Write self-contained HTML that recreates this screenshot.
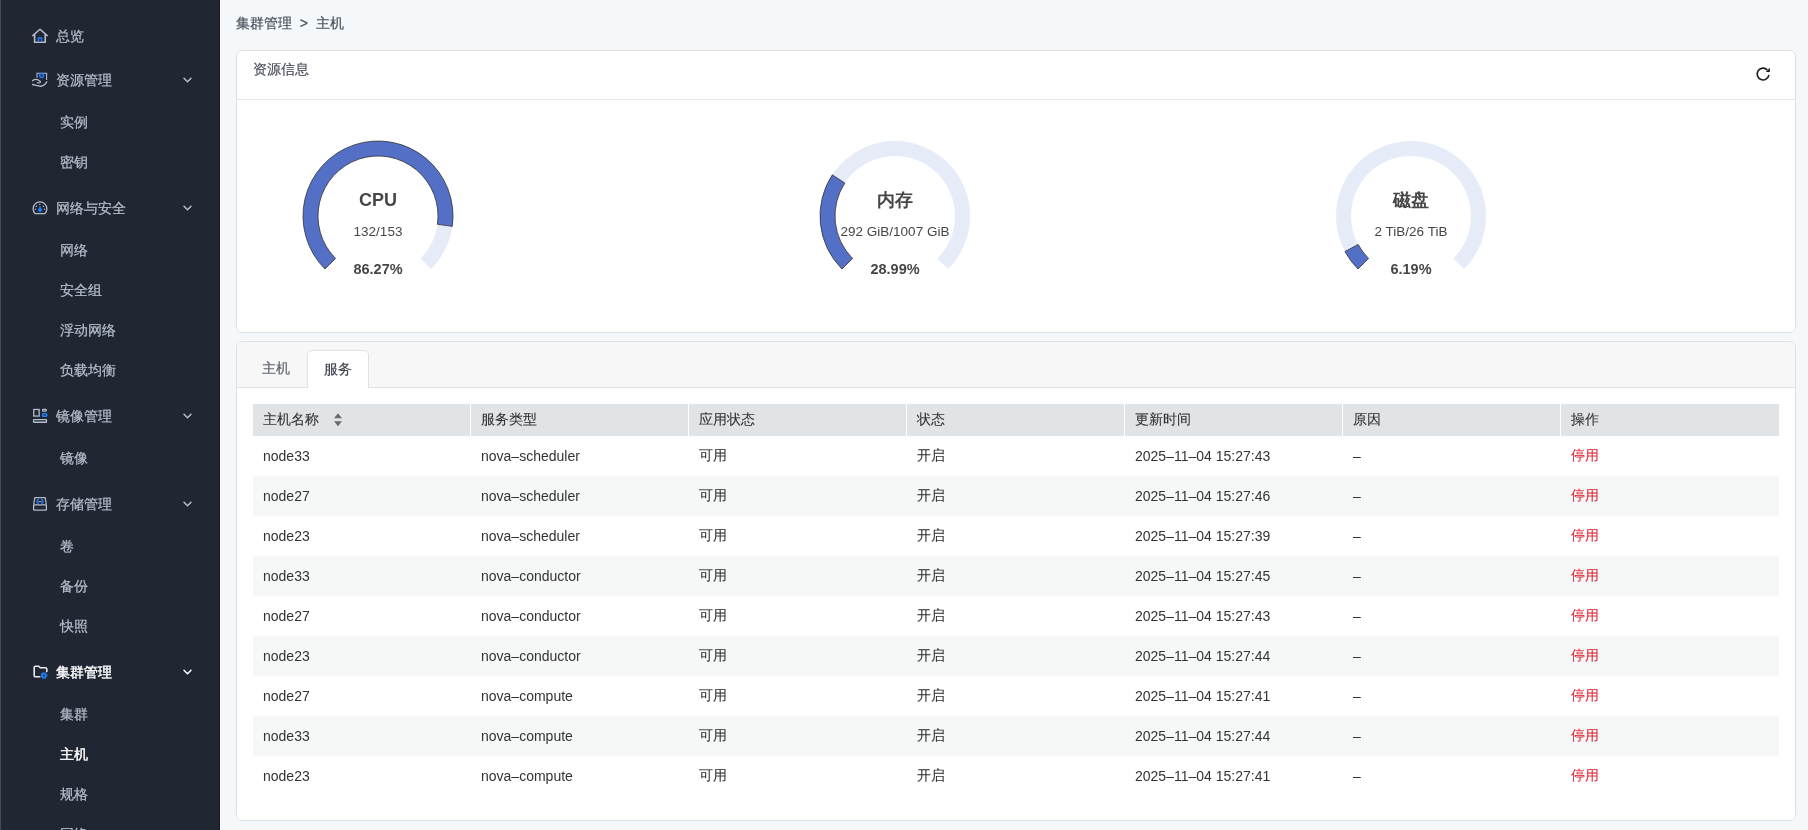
<!DOCTYPE html>
<html><head><meta charset="utf-8"><style>
*{margin:0;padding:0;box-sizing:border-box}
html,body{width:1808px;height:830px;overflow:hidden}
body{font-family:"Liberation Sans",sans-serif;font-size:14px;background:#f4f8fb;position:relative;color:#333}
.sb{position:absolute;left:0;top:0;width:220px;height:830px;background:#212633;overflow:hidden}
.sb .edge{position:absolute;left:0;top:0;width:1px;height:830px;background:#454a56}.sb .edge2{position:absolute;left:219px;top:0;width:1px;height:830px;background:#151a27}.sep{position:absolute;left:220px;top:0;width:1px;height:830px;background:#fff}
.sb .it{position:absolute;height:20px;line-height:20px;font-size:14px;color:#b3bccb;white-space:nowrap;-webkit-text-stroke:0.25px #b3bccb;will-change:transform}
.sb .h{left:56px}
.sb .c{left:60px}
.sb .act{color:#ffffff;-webkit-text-stroke:0.4px #fff}
.sb svg.ic{position:absolute;left:32px;width:16px;height:16px}
.sb svg.ch{position:absolute;left:181px;width:12px;height:12px}
.bc{will-change:transform;-webkit-text-stroke:0.2px #4b505b;position:absolute;left:236px;top:13px;height:20px;line-height:20px;color:#4b505b;font-size:14px;white-space:nowrap}
.card1{position:absolute;left:236px;top:50px;width:1560px;height:283px;background:#fff;border:1px solid #dfe0e2;border-radius:6px}
.card1 .hd{position:absolute;left:0;top:0;right:0;height:49px;border-bottom:1px solid #e5e7eb}
.card1 .tt{will-change:transform;-webkit-text-stroke:0.2px #4b505b;position:absolute;left:16px;top:8px;line-height:20px;color:#4b505b}
.card2{position:absolute;left:236px;top:341px;width:1560px;height:480px;background:#fff;border:1px solid #dfe0e2;border-radius:6px;overflow:hidden}
.tabbar{position:absolute;left:0;top:0;right:0;height:46px;background:#f7f7f7;border-bottom:1px solid #dfe2e6}
.tab{will-change:transform;-webkit-text-stroke:0.2px currentColor;position:absolute;top:8px;height:38px;line-height:36px;font-size:14px;color:#5f6570;text-align:center}
.tab.on{background:#fff;border:1px solid #dde1e8;border-bottom:none;border-radius:5px 5px 0 0;color:#3f444d}
table{will-change:transform;position:absolute;left:16px;top:62px;border-collapse:separate;border-spacing:0;table-layout:fixed;width:1526px}
th{-webkit-text-stroke:0.1px #333;height:32px;background:#e1e4e6;text-align:left;font-weight:normal;color:#333;padding-left:10px;border-right:1px solid #fff;font-size:14px}
th:last-child{border-right:none}
td{height:40px;padding-left:10px;color:#333;font-size:14px;white-space:nowrap}
tr.alt td{background:#f6f7f7}
td.op{color:#e0283a;-webkit-text-stroke:0.1px #e0283a}td.cj{-webkit-text-stroke:0.1px #333}
.g{position:absolute;left:0;top:0}
.gl{will-change:transform;position:absolute;text-align:center;width:200px;color:#464646;white-space:nowrap}
</style></head><body>
<div class="sb"><div class="edge"></div><div class="edge2"></div><div class="it h" style="top:26px">总览</div><svg class="ic" style="top:28px" viewBox="0 0 16 16"><path d="M0.8 7.6L8 1.3l7.2 6.3" fill="none" stroke="#b3bccb" stroke-width="1.5" stroke-linejoin="round" stroke-linecap="round"/><path d="M2.6 6.2v8h10.6v-8" fill="none" stroke="#b3bccb" stroke-width="1.6"/><path d="M6.4 13.6V10h3.2v3.6" fill="none" stroke="#1e80ff" stroke-width="1.4"/></svg><div class="it h" style="top:70px">资源管理</div><svg class="ic" style="top:72px" viewBox="0 0 16 16"><path d="M5 5.8V1.3h9.6V8" fill="none" stroke="#b3bccb" stroke-width="1.1"/><rect x="7.7" y="1.6" width="3.8" height="3.8" rx="1.3" fill="none" stroke="#1e80ff" stroke-width="1.6"/><path d="M0.4 8.7C2 7.6 4.2 7.1 6 7.9C7.8 8.6 8.8 9.6 8.2 10.4C7.6 11 6.4 10.8 5.5 10.6M0.4 12.5C3.5 13.2 6.8 14.5 9.5 14.2C11.8 13.9 13.6 12 14.8 9.8" fill="none" stroke="#b3bccb" stroke-width="1.3" stroke-linecap="round"/></svg><svg class="ch" style="top:74px" viewBox="0 0 12 12"><path d="M3 4.2L6.5 7.8 10 4.2" fill="none" stroke="#b3bccb" stroke-width="1.5" stroke-linecap="round" stroke-linejoin="round"/></svg><div class="it c" style="top:112px">实例</div><div class="it c" style="top:152px">密钥</div><div class="it h" style="top:198px">网络与安全</div><svg class="ic" style="top:200px" viewBox="0 0 16 16"><path d="M3.1 13.6A6.9 6.9 0 1 1 12.9 13.6Z" fill="none" stroke="#b3bccb" stroke-width="1.3" stroke-linejoin="round"/><circle cx="7.8" cy="4.4" r="0.75" fill="#b3bccb"/><circle cx="4.4" cy="6.3" r="0.75" fill="#b3bccb"/><circle cx="11.3" cy="6.3" r="0.75" fill="#b3bccb"/><circle cx="3.5" cy="9.3" r="0.75" fill="#b3bccb"/><circle cx="12.5" cy="9.3" r="0.75" fill="#b3bccb"/><path d="M8 5.8L10.1 10a2.1 2.1 0 1 1-4.2 0Z" fill="#1e80ff"/></svg><svg class="ch" style="top:202px" viewBox="0 0 12 12"><path d="M3 4.2L6.5 7.8 10 4.2" fill="none" stroke="#b3bccb" stroke-width="1.5" stroke-linecap="round" stroke-linejoin="round"/></svg><div class="it c" style="top:240px">网络</div><div class="it c" style="top:280px">安全组</div><div class="it c" style="top:320px">浮动网络</div><div class="it c" style="top:360px">负载均衡</div><div class="it h" style="top:406px">镜像管理</div><svg class="ic" style="top:408px" viewBox="0 0 16 16"><rect x="1.75" y="1.45" width="5.4" height="6.6" fill="none" stroke="#b3bccb" stroke-width="1.3"/><rect x="10.55" y="1.45" width="3.7" height="1.7" rx="0.6" fill="none" stroke="#b3bccb" stroke-width="1.3"/><rect x="10.45" y="5.85" width="4.3" height="2.3" rx="0.8" fill="none" stroke="#1e80ff" stroke-width="1.5"/><rect x="1.55" y="11.65" width="12.9" height="2.6" rx="0.3" fill="none" stroke="#b3bccb" stroke-width="1.3"/></svg><svg class="ch" style="top:410px" viewBox="0 0 12 12"><path d="M3 4.2L6.5 7.8 10 4.2" fill="none" stroke="#b3bccb" stroke-width="1.5" stroke-linecap="round" stroke-linejoin="round"/></svg><div class="it c" style="top:448px">镜像</div><div class="it h" style="top:494px">存储管理</div><svg class="ic" style="top:496px" viewBox="0 0 16 16"><path d="M1.7 8.6L2.8 1.7h10.4l1.1 6.9" fill="none" stroke="#b3bccb" stroke-width="1.2" stroke-linejoin="round"/><rect x="1.6" y="8.8" width="12.8" height="5.4" rx="0.8" fill="none" stroke="#b3bccb" stroke-width="1.3"/><path d="M6.3 3.3C4.6 4 4.6 6.8 6.3 7.3M9.7 3.3C11.4 4 11.4 6.8 9.7 7.3" fill="none" stroke="#1e80ff" stroke-width="1.4" stroke-linecap="round"/><path d="M6.8 5.5h2.4" stroke="#b3bccb" stroke-width="0.9" stroke-linecap="round"/></svg><svg class="ch" style="top:498px" viewBox="0 0 12 12"><path d="M3 4.2L6.5 7.8 10 4.2" fill="none" stroke="#b3bccb" stroke-width="1.5" stroke-linecap="round" stroke-linejoin="round"/></svg><div class="it c" style="top:536px">卷</div><div class="it c" style="top:576px">备份</div><div class="it c" style="top:616px">快照</div><div class="it h act" style="top:662px">集群管理</div><svg class="ic" style="top:664px" viewBox="0 0 16 16"><path d="M7.8 12.8H3.6Q2.2 12.8 2.2 11.4V3.6Q2.2 2.2 3.6 2.2H6.7L8.3 3.8H13.4Q14.8 3.8 14.8 5.2V7.6" fill="none" stroke="#ececec" stroke-width="1.6" stroke-linejoin="round" stroke-linecap="round"/><circle cx="11.9" cy="11.6" r="1.9" fill="none" stroke="#1e80ff" stroke-width="1.7"/><circle cx="11.9" cy="11.6" r="2.9" fill="none" stroke="#1e80ff" stroke-width="1.2" stroke-dasharray="1.3 1.1"/></svg><svg class="ch" style="top:666px" viewBox="0 0 12 12"><path d="M3 4.2L6.5 7.8 10 4.2" fill="none" stroke="#ffffff" stroke-width="1.5" stroke-linecap="round" stroke-linejoin="round"/></svg><div class="it c" style="top:704px">集群</div><div class="it c act" style="top:744px">主机</div><div class="it c" style="top:784px">规格</div><div class="it c" style="top:824px">网络</div></div><div class="sep"></div>
<div class="bc">集群管理 &nbsp;&gt;&nbsp; 主机</div>
<div class="card1"><div class="hd"><div class="tt">资源信息</div><svg width="16" height="16" viewBox="0 0 16 16" style="position:absolute;left:1518px;top:15px"><path d="M13.9 8.9A5.9 5.9 0 1 1 12.3 3.9" fill="none" stroke="#1a1d23" stroke-width="1.6"/><path d="M14.9 1.7V5.9H10.7Z" fill="#1a1d23"/></svg></div></div>
<svg class="g" width="1808" height="830" viewBox="0 0 1808 830" style="position:absolute;left:0;top:0;pointer-events:none"><path d="M324.97 269.03A75 75 0 1 1 431.03 269.03L420.43 258.43A60 60 0 1 0 335.57 258.43Z" fill="#e6ebf8"/><path d="M324.97 269.03A75 75 0 1 1 452.28 226.35L437.43 224.28A60 60 0 1 0 335.57 258.43Z" fill="#5470c6" stroke="#333" stroke-width="0.8"/><path d="M841.97 269.03A75 75 0 1 1 948.03 269.03L937.43 258.43A60 60 0 1 0 852.57 258.43Z" fill="#e6ebf8"/><path d="M841.97 269.03A75 75 0 0 1 832.30 174.85L844.84 183.08A60 60 0 0 0 852.57 258.43Z" fill="#5470c6" stroke="#333" stroke-width="0.8"/><path d="M1357.97 269.03A75 75 0 1 1 1464.03 269.03L1453.43 258.43A60 60 0 1 0 1368.57 258.43Z" fill="#e6ebf8"/><path d="M1357.97 269.03A75 75 0 0 1 1344.96 251.54L1358.16 244.43A60 60 0 0 0 1368.57 258.43Z" fill="#5470c6" stroke="#333" stroke-width="0.8"/></svg>
<div class="gl" style="left:278px;top:189px;font-size:18px;font-weight:bold;line-height:22px">CPU</div><div class="gl" style="left:278px;top:222px;font-size:13.5px;line-height:18px;padding-top:1px">132/153</div><div class="gl" style="left:278px;top:260px;font-size:14.5px;font-weight:bold;line-height:18px">86.27%</div><div class="gl" style="left:795px;top:189px;font-size:18px;font-weight:bold;line-height:22px">内存</div><div class="gl" style="left:795px;top:222px;font-size:13.5px;line-height:18px;padding-top:1px">292 GiB/1007 GiB</div><div class="gl" style="left:795px;top:260px;font-size:14.5px;font-weight:bold;line-height:18px">28.99%</div><div class="gl" style="left:1311px;top:189px;font-size:18px;font-weight:bold;line-height:22px">磁盘</div><div class="gl" style="left:1311px;top:222px;font-size:13.5px;line-height:18px;padding-top:1px">2 TiB/26 TiB</div><div class="gl" style="left:1311px;top:260px;font-size:14.5px;font-weight:bold;line-height:18px">6.19%</div>
<div class="card2"><div class="tabbar"><div class="tab" style="left:12px;width:54px">主机</div><div class="tab on" style="left:70px;width:62px">服务</div></div>
<table><colgroup><col style="width:218px"><col style="width:218px"><col style="width:218px"><col style="width:218px"><col style="width:218px"><col style="width:218px"><col style="width:218px"></colgroup><tr><th style="position:relative">主机名称<svg width="8" height="14" viewBox="0 0 8 14" style="position:absolute;left:81px;top:9px"><path d="M4 0.3L8 5.3H0Z M0 8.3H8L4 13.3Z" fill="#6b6b6b"/></svg></th><th>服务类型</th><th>应用状态</th><th>状态</th><th>更新时间</th><th>原因</th><th>操作</th></tr><tr><td>node33</td><td>nova–scheduler</td><td class="cj">可用</td><td class="cj">开启</td><td>2025–11–04 15:27:43</td><td>–</td><td class="op">停用</td></tr><tr class="alt"><td>node27</td><td>nova–scheduler</td><td class="cj">可用</td><td class="cj">开启</td><td>2025–11–04 15:27:46</td><td>–</td><td class="op">停用</td></tr><tr><td>node23</td><td>nova–scheduler</td><td class="cj">可用</td><td class="cj">开启</td><td>2025–11–04 15:27:39</td><td>–</td><td class="op">停用</td></tr><tr class="alt"><td>node33</td><td>nova–conductor</td><td class="cj">可用</td><td class="cj">开启</td><td>2025–11–04 15:27:45</td><td>–</td><td class="op">停用</td></tr><tr><td>node27</td><td>nova–conductor</td><td class="cj">可用</td><td class="cj">开启</td><td>2025–11–04 15:27:43</td><td>–</td><td class="op">停用</td></tr><tr class="alt"><td>node23</td><td>nova–conductor</td><td class="cj">可用</td><td class="cj">开启</td><td>2025–11–04 15:27:44</td><td>–</td><td class="op">停用</td></tr><tr><td>node27</td><td>nova–compute</td><td class="cj">可用</td><td class="cj">开启</td><td>2025–11–04 15:27:41</td><td>–</td><td class="op">停用</td></tr><tr class="alt"><td>node33</td><td>nova–compute</td><td class="cj">可用</td><td class="cj">开启</td><td>2025–11–04 15:27:44</td><td>–</td><td class="op">停用</td></tr><tr><td>node23</td><td>nova–compute</td><td class="cj">可用</td><td class="cj">开启</td><td>2025–11–04 15:27:41</td><td>–</td><td class="op">停用</td></tr></table>
</div>
</body></html>
